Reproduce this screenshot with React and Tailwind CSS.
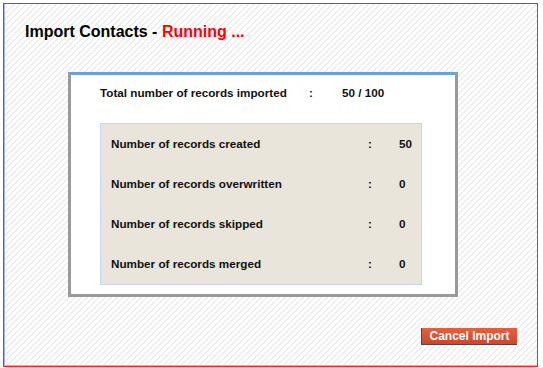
const rows = [
  { label: 'Number of records created', value: '50' },
  { label: 'Number of records overwritten', value: '0' },
  { label: 'Number of records skipped', value: '0' },
  { label: 'Number of records merged', value: '0' },
];

const App = () => {
  return (
    <div
      className="w-[543px] h-[368px] bg-white pt-[3px] pl-[3px]"
      style={{ fontFamily: '"Liberation Sans", Arial, sans-serif' }}
    >
      {/* Outer frame */}
      <div className="w-[535px] h-[364px] border border-[#ff2020] bg-[repeating-linear-gradient(135deg,#ffffff_0px,#ffffff_2.83px,#ededed_2.83px,#ededed_4.24px)]">
        <div className="h-full flex flex-col border-l border-b border-[#a9b9ee]">
          {/* Title */}
          <div className="pt-[18px] pl-[20px] text-[16px] leading-[20px] font-bold text-black">
            Import Contacts - <span className="text-[#ff0000]">Running ...</span>
          </div>

          {/* Progress panel */}
          <div className="ml-[63px] mt-[30px] w-[390px] h-[225px] bg-white border-[3px] border-[#9a9a9a] border-t-[#6aa2dc] flex flex-col">
            <div className="flex pt-[11px] pl-[29px] text-[11.7px] leading-[14px] font-bold text-[#111]">
              <span className="w-[209px]">Total number of records imported</span>
              <span className="w-[33px]">:</span>
              <span>50 / 100</span>
            </div>

            <div className="ml-[29px] mt-[23px] w-[322px] border border-[#c7d6f6] bg-[#e9e5da] flex flex-col">
              {rows.map((row) => (
                <div
                  key={row.label}
                  className="h-[40px] flex items-center pl-[10px] text-[11.7px] leading-[14px] font-bold text-[#111]"
                >
                  <span className="w-[257px]">{row.label}</span>
                  <span className="w-[31px]">:</span>
                  <span>{row.value}</span>
                </div>
              ))}
            </div>
          </div>

          {/* Actions */}
          <div className="flex justify-end mt-[31px] pr-[20px]">
            <button className="w-[96px] h-[17px] bg-gradient-to-b from-[#e4603f] to-[#cf4629] border-b border-l border-[#4a4a4a] text-white text-[12px] leading-[15px] font-bold">
              Cancel Import
            </button>
          </div>
        </div>
      </div>
    </div>
  );
};

export default App;
